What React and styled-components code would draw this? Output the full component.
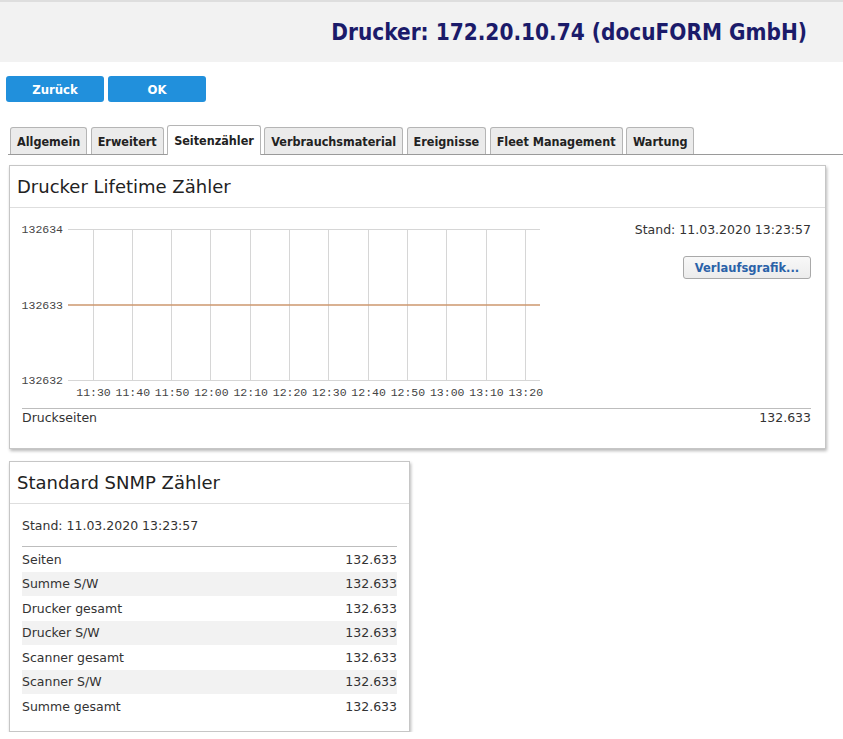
import React from "react";
import styled, { createGlobalStyle } from "styled-components";

const GlobalStyle = createGlobalStyle`
  html, body { margin: 0; padding: 0; background: #fff; }
  body {
    font-family: "DejaVu Sans", Verdana, sans-serif;
    font-size: 12.5px;
    color: #333;
  }
  * { box-sizing: border-box; }
`;

const condensed = `
  font-family: "DejaVu Sans Condensed", "DejaVu Sans", sans-serif;
  font-stretch: condensed;
`;

const Header = styled.header`
  height: 62px;
  background: #f2f2f2;
  border-top: 2px solid #dedede;
  display: flex;
  align-items: center;
  justify-content: flex-end;
  padding-right: 36px;
`;

const Title = styled.h1`
  margin: 0;
  ${condensed}
  font-weight: bold;
  font-size: 22.4px;
  color: #1b1b6a;
`;

const Toolbar = styled.div`
  display: flex;
  gap: 4px;
  padding: 14px 0 0 6px;
`;

const PrimaryButton = styled.button`
  width: 98px;
  height: 26px;
  border: 0;
  border-radius: 3px;
  background: #2190dc;
  color: #fff;
  ${condensed}
  font-weight: bold;
  font-size: 13px;
  padding: 0;
`;

const TabBar = styled.nav`
  display: flex;
  align-items: flex-end;
  gap: 3.4px;
  margin: 25px 0 0 8px;
  padding-left: 2px;
  border-bottom: 1px solid #9a9a9a;
  height: 28px;
`;

const Tab = styled.div`
  height: ${(p) => (p.$active ? "30px" : "27px")};
  margin-bottom: ${(p) => (p.$active ? "-1px" : "0")};
  padding: 0 6px;
  display: flex;
  align-items: center;
  background: ${(p) => (p.$active ? "#fff" : "#ebebeb")};
  border: 1px solid #b5b5b5;
  border-bottom: 0;
  border-radius: 3px 3px 0 0;
  ${condensed}
  font-weight: bold;
  font-size: 12.5px;
  color: #222;
`;

const Content = styled.main`
  padding: 10px 17px 0 9px;
  display: flex;
  flex-direction: column;
  align-items: flex-start;
  gap: 12px;
`;

const Panel = styled.section`
  width: ${(p) => p.$width};
  background: #fff;
  border: 1px solid #c6c6c6;
  box-shadow: 1px 2px 3px rgba(0, 0, 0, 0.28);
`;

const PanelHeader = styled.h2`
  margin: 0;
  height: 42px;
  line-height: 41px;
  padding-left: 7px;
  border-bottom: 1px solid #dedede;
  font-size: 18px;
  font-weight: normal;
  color: #222;
`;

const PanelBody = styled.div`
  padding: ${(p) => p.$padding};
`;

const ChartRow = styled.div`
  display: flex;
  justify-content: space-between;
  align-items: flex-start;
`;

const Side = styled.div`
  display: flex;
  flex-direction: column;
  align-items: flex-end;
  padding-top: 1px;
`;

const StandText = styled.div`
  line-height: 16px;
  margin-top: ${(p) => p.$mt || "0"};
`;

const GhostButton = styled.button`
  margin-top: 18px;
  width: 128px;
  height: 23px;
  border: 1px solid #a9a9a9;
  border-radius: 3px;
  background: linear-gradient(#f8f8f8, #ececec);
  color: #2a62a8;
  font-family: "DejaVu Sans", Verdana, sans-serif;
  font-weight: bold;
  font-size: 11.5px;
  padding: 0;
`;

const TotalRow = styled.div`
  margin-top: 7px;
  border-top: 1px solid #bdbdbd;
  display: flex;
  justify-content: space-between;
  line-height: 16px;
  padding-top: 1px;
`;

const Table = styled.div`
  margin-top: 12px;
  border-top: 1px solid #bdbdbd;
`;

const Row = styled.div`
  height: 24.5px;
  display: flex;
  align-items: center;
  justify-content: space-between;
  background: ${(p) => (p.$striped ? "#f2f2f2" : "transparent")};
`;

const ChartSvg = styled.svg`
  display: block;
`;

const times = ["11:30", "11:40", "11:50", "12:00", "12:10", "12:20", "12:30", "12:40", "12:50", "13:00", "13:10", "13:20"];

function Chart() {
  const top = 8;
  const mid = 83.5;
  const bottom = 159;
  const left = 46;
  const right = 518;
  const xs = times.map((_, i) => 70.5 + i * 39.3);
  const axisFont = { fontFamily: '"Liberation Mono", monospace', fontSize: 11.5, fill: "#444" };
  return (
    <ChartSvg width="523" height="180" viewBox="0 0 523 180">
      {[top, mid, bottom].map((y) => (
        <line key={y} x1={left} x2={right} y1={y + 0.5} y2={y + 0.5} stroke="#d6d6d6" strokeWidth="1" />
      ))}
      {xs.map((x) => (
        <line key={x} x1={Math.round(x) + 0.5} x2={Math.round(x) + 0.5} y1={top} y2={bottom} stroke="#d6d6d6" strokeWidth="1" />
      ))}
      <line x1={left} x2={right} y1={mid + 0.5} y2={mid + 0.5} stroke="#c8793a" strokeWidth="1.2" />
      <text x="41" y={top + 4} textAnchor="end" {...axisFont}>132634</text>
      <text x="41" y={mid + 4} textAnchor="end" {...axisFont}>132633</text>
      <text x="41" y={bottom + 4} textAnchor="end" {...axisFont}>132632</text>
      {times.map((t, i) => (
        <text key={t} x={xs[i] + 1} y="175" textAnchor="middle" {...axisFont}>{t}</text>
      ))}
    </ChartSvg>
  );
}

const rows = ["Seiten", "Summe S/W", "Drucker gesamt", "Drucker S/W", "Scanner gesamt", "Scanner S/W", "Summe gesamt"];
const tabs = ["Allgemein", "Erweitert", "Seitenzähler", "Verbrauchsmaterial", "Ereignisse", "Fleet Management", "Wartung"];

export default function App() {
  return (
    <>
      <GlobalStyle />
      <Header>
        <Title>Drucker: 172.20.10.74 (docuFORM GmbH)</Title>
      </Header>
      <Toolbar>
        <PrimaryButton>Zurück</PrimaryButton>
        <PrimaryButton>OK</PrimaryButton>
      </Toolbar>
      <TabBar>
        {tabs.map((t) => (
          <Tab key={t} $active={t === "Seitenzähler"}>{t}</Tab>
        ))}
      </TabBar>
      <Content>
        <Panel $width="817px">
          <PanelHeader>Drucker Lifetime Zähler</PanelHeader>
          <PanelBody $padding="13px 14px 22px 12px">
            <ChartRow>
              <Chart />
              <Side>
                <StandText>Stand: 11.03.2020 13:23:57</StandText>
                <GhostButton>Verlaufsgrafik...</GhostButton>
              </Side>
            </ChartRow>
            <TotalRow>
              <span>Druckseiten</span>
              <span>132.633</span>
            </TotalRow>
          </PanelBody>
        </Panel>
        <Panel $width="401px">
          <PanelHeader>Standard SNMP Zähler</PanelHeader>
          <PanelBody $padding="0 12px 12px 12px">
            <StandText $mt="14px">Stand: 11.03.2020 13:23:57</StandText>
            <Table>
              {rows.map((r, i) => (
                <Row key={r} $striped={i % 2 === 1}>
                  <span>{r}</span>
                  <span>132.633</span>
                </Row>
              ))}
            </Table>
          </PanelBody>
        </Panel>
      </Content>
    </>
  );
}
